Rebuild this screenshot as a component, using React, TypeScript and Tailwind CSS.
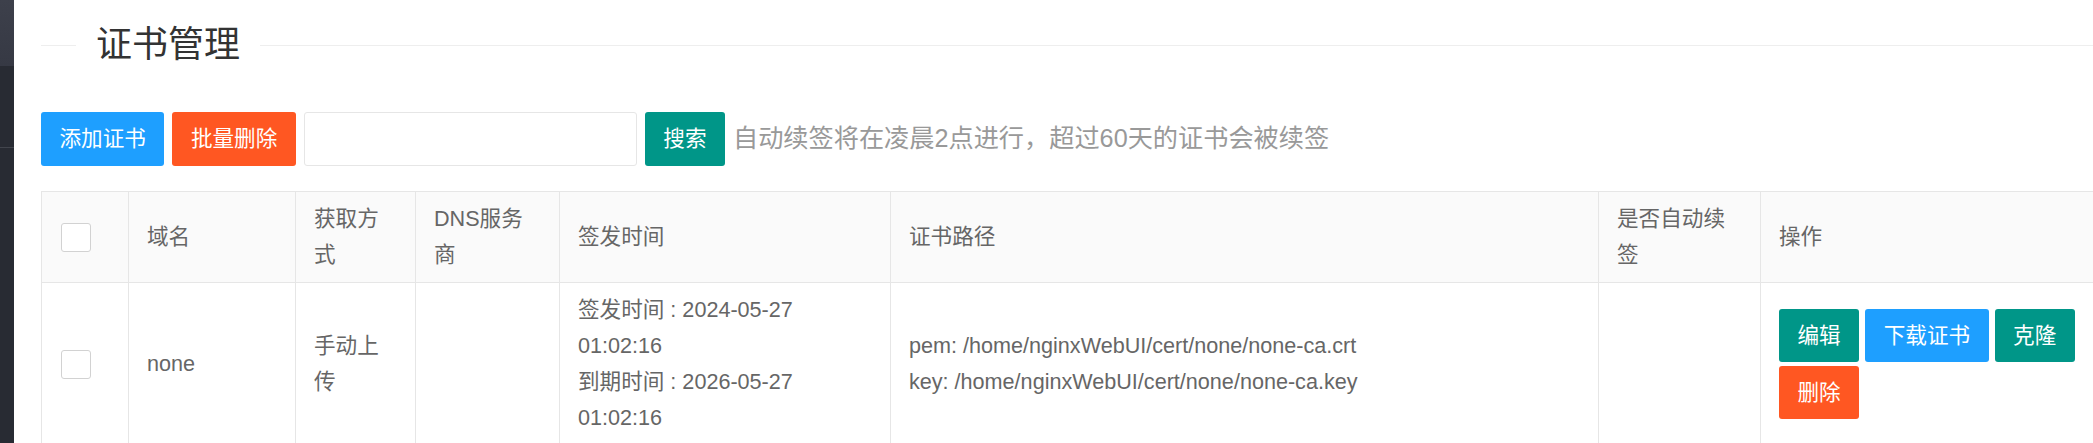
import type { ReactNode } from "react";

const gridCols =
  "grid grid-cols-[87px_167px_120px_144px_331px_708px_162px_380px]";

const headCell =
  "flex items-center pl-[18px] pr-5 py-[9px] bg-[#fafafa] border-r border-b border-[#e6e6e6]";
const bodyCell =
  "flex items-center pl-[18px] pr-5 py-[9px] bg-white border-r border-b border-[#e6e6e6]";

function Checkbox() {
  return (
    <span className="block w-[30px] h-[29px] rounded-[3px] border border-[#d2d2d2] bg-white" />
  );
}

function Button({
  color,
  tall = true,
  children,
}: {
  color: string;
  tall?: boolean;
  children: ReactNode;
}) {
  return (
    <button
      type="button"
      className={`${tall ? "h-[54px]" : "h-[53px]"} px-[18.5px] rounded-[3px] text-white text-[21.6px] leading-none whitespace-nowrap ${color}`}
    >
      {children}
    </button>
  );
}

export default function App() {
  return (
    <div className="flex h-screen w-full overflow-hidden bg-white font-['Liberation_Sans','Noto_Sans_CJK_SC',sans-serif] text-[21.6px] text-[#666]">
      {/* collapsed side menu edge */}
      <aside className="w-[14px] shrink-0 flex flex-col bg-[#282b33]">
        <div className="h-[66px] bg-gradient-to-b from-[#3d404b] to-[#363944]" />
        <div className="h-[81px]" />
        <div className="h-px bg-[#42454d]" />
      </aside>

      <main className="flex-1 min-w-0 pl-[27px] pt-[18px]">
        {/* fieldset title */}
        <div className="flex items-center h-[54px]">
          <span className="w-[35px] h-px bg-[#eeeeee]" />
          <h2 className="px-5 text-[36px] leading-[54px] font-normal text-[#333]">
            证书管理
          </h2>
          <span className="flex-1 h-px bg-[#eeeeee]" />
        </div>

        {/* toolbar */}
        <div className="mt-10 flex items-center gap-2">
          <Button color="bg-[#1e9fff]">添加证书</Button>
          <Button color="bg-[#ff5722]">批量删除</Button>
          <input
            type="text"
            className="w-[333px] h-[54px] px-3 rounded-[3px] border border-[#e6e6e6] bg-white outline-none"
          />
          <Button color="bg-[#009688]">搜索</Button>
          <span className="text-[25.2px] leading-none text-[#999] whitespace-nowrap">
            自动续签将在凌晨2点进行，超过60天的证书会被续签
          </span>
        </div>

        {/* table */}
        <div className={`mt-[25px] w-max border-l border-t border-[#e6e6e6] leading-[36px] ${gridCols}`}>
          <div className={`${headCell} pl-[19px]`}>
            <Checkbox />
          </div>
          <div className={headCell}>域名</div>
          <div className={headCell}>获取方式</div>
          <div className={headCell}>DNS服务商</div>
          <div className={headCell}>签发时间</div>
          <div className={headCell}>证书路径</div>
          <div className={headCell}>是否自动续签</div>
          <div className={headCell}>操作</div>

          <div className={`${bodyCell} pl-[19px]`}>
            <Checkbox />
          </div>
          <div className={bodyCell}>none</div>
          <div className={bodyCell}>手动上传</div>
          <div className={bodyCell} />
          <div className={bodyCell}>
            <div>
              <div>签发时间 : 2024-05-27 01:02:16</div>
              <div>到期时间 : 2026-05-27 01:02:16</div>
            </div>
          </div>
          <div className={bodyCell}>
            <div>
              <div>pem: /home/nginxWebUI/cert/none/none-ca.crt</div>
              <div>key: /home/nginxWebUI/cert/none/none-ca.key</div>
            </div>
          </div>
          <div className={bodyCell} />
          <div className={bodyCell}>
            <div className="flex flex-wrap gap-x-[6px] gap-y-[4px]">
              <Button color="bg-[#009688]" tall={false}>编辑</Button>
              <Button color="bg-[#1e9fff]" tall={false}>下载证书</Button>
              <Button color="bg-[#009688]" tall={false}>克隆</Button>
              <Button color="bg-[#ff5722]" tall={false}>删除</Button>
            </div>
          </div>
        </div>
      </main>
    </div>
  );
}
